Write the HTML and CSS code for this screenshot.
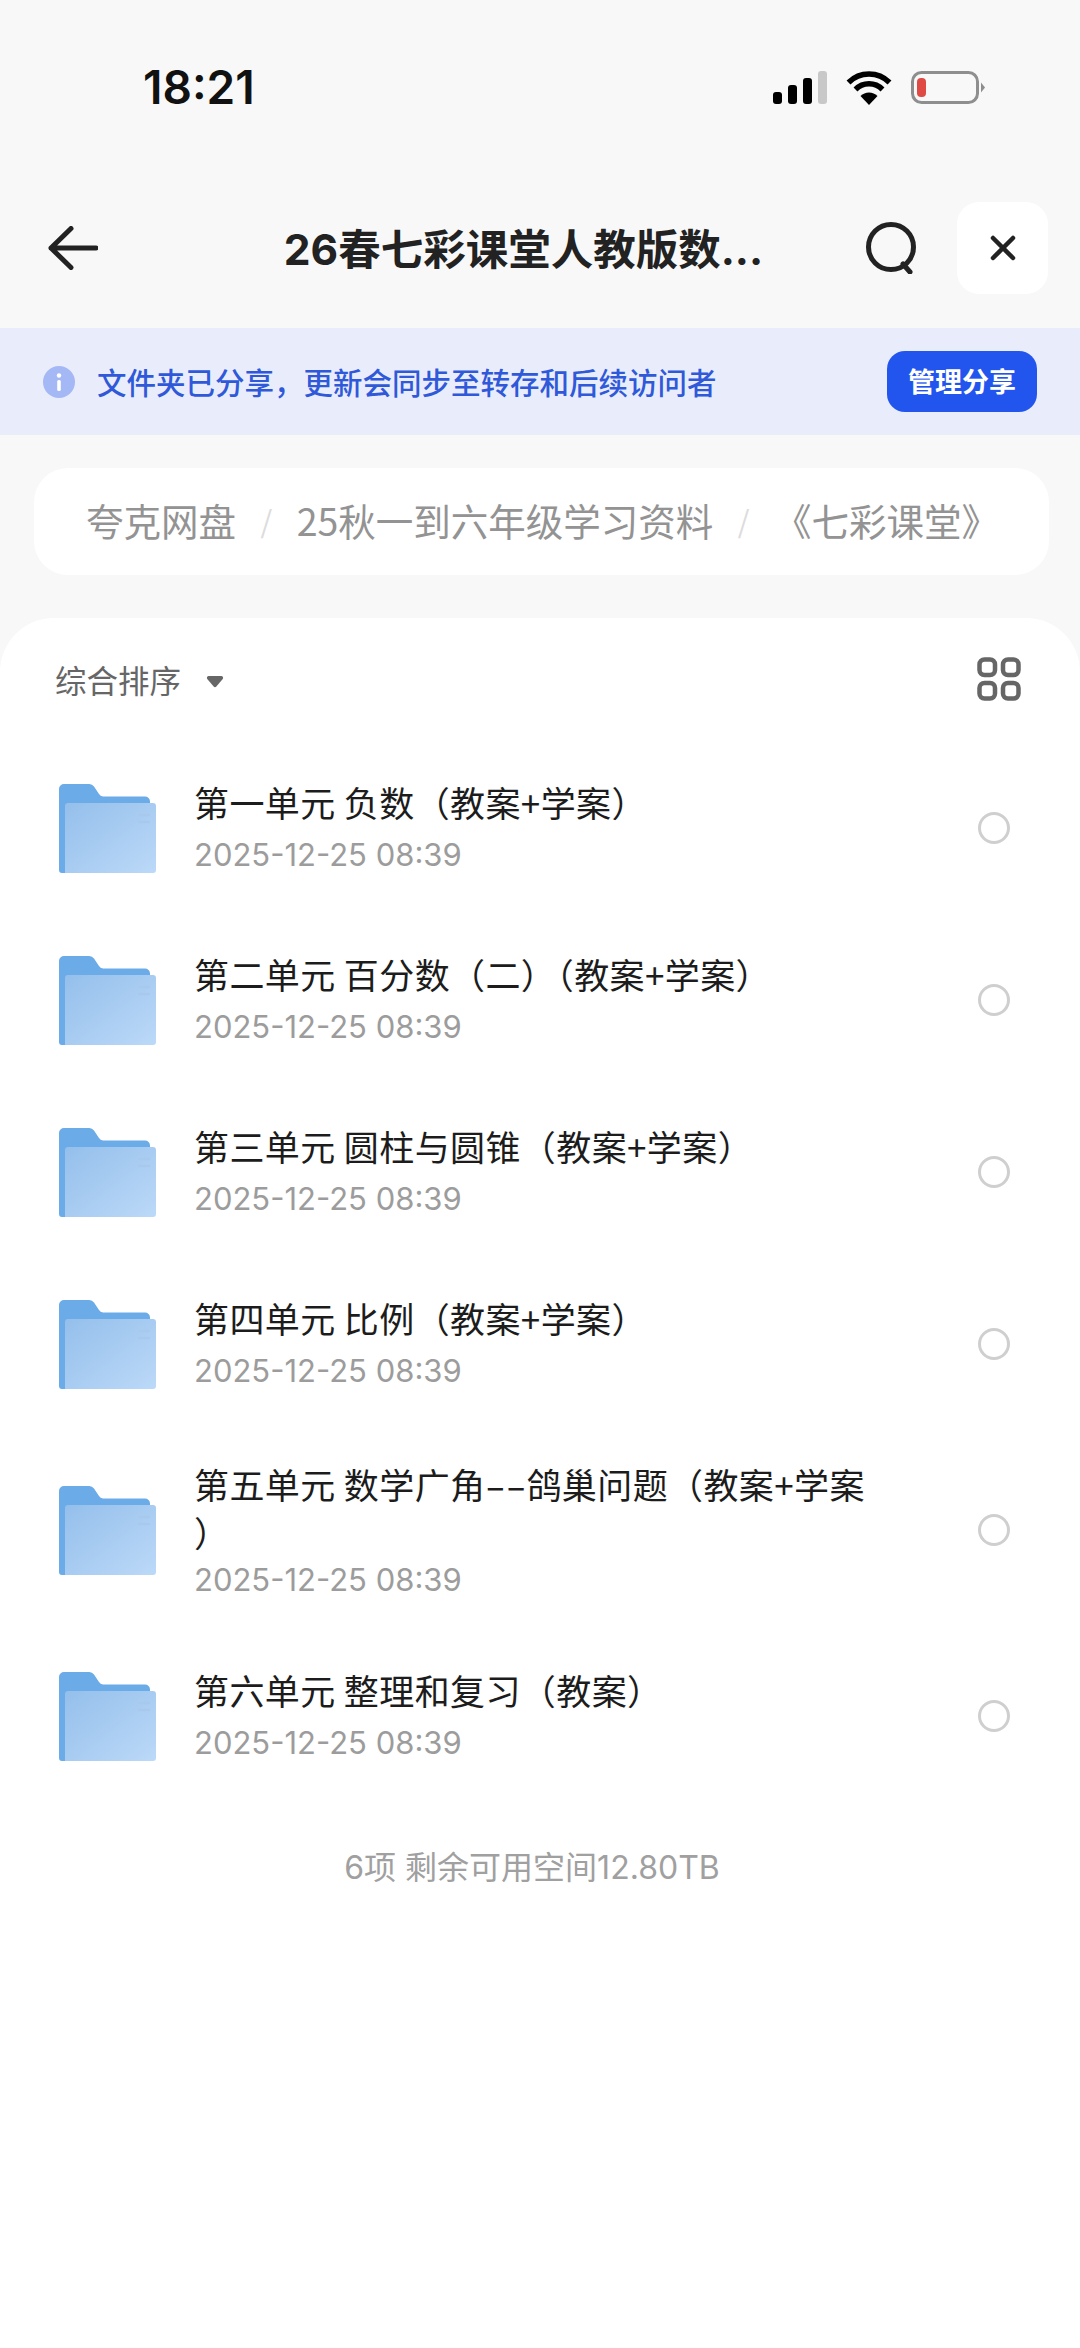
FILE: index.html
```html
<!DOCTYPE html>
<html lang="zh-CN">
<head>
<meta charset="utf-8">
<title>26春七彩课堂人教版数学</title>
<link rel="stylesheet" href="styles.css">
</head>
<body>
<div class="page">
  <svg width="0" height="0" class="defs">
    <defs>
      <linearGradient id="fg" x1="0" y1="0" x2="1" y2="1">
        <stop offset="0" stop-color="#94bfeb"/>
        <stop offset="1" stop-color="#bcd9f8"/>
      </linearGradient>
      <symbol id="folder" viewBox="0 0 97 89">
        <path d="M0 5a5 5 0 0 1 5-5h25a6 6 0 0 1 5 2.500l5 7.500a5 5 0 0 0 4 2.500h42a5 5 0 0 1 5 5V40H8V89H3a3 3 0 0 1-3-3z" fill="#6aabe8"/>
        <path d="M6 22a3 3 0 0 1 3-3h85a3 3 0 0 1 3 3v64a3 3 0 0 1-3 3H6z" fill="url(#fg)"/>
        <path d="M79 31h12M79 38h12" stroke="#a9c9ec" stroke-width="2.500"/>
      </symbol>
      <symbol id="radio" viewBox="0 0 32 32">
        <circle cx="16" cy="16" r="14.500" fill="none" stroke="#cfcfcf" stroke-width="3"/>
      </symbol>
    </defs>
  </svg>

  <div class="status">
    <span class="time">18:21</span>
    <div class="status-icons">
      <svg width="54" height="33" viewBox="0 0 54 33">
        <rect x="0" y="21" width="9" height="12" rx="3" fill="#000"/>
        <rect x="15" y="14" width="9" height="19" rx="3" fill="#000"/>
        <rect x="30" y="7" width="9" height="26" rx="3" fill="#000"/>
        <rect x="45" y="0" width="9" height="33" rx="3" fill="#c8c8c8"/>
      </svg>
      <svg width="46" height="34" viewBox="0 0 46 34">
        <path d="M2.500 11.500a29 29 0 0 1 41 0M9.500 18.500a19 19 0 0 1 27 0" fill="none" stroke="#000" stroke-width="5.500"/>
        <path d="M23 34l-8.500-9a12 12 0 0 1 17 0z" fill="#000"/>
      </svg>
      <svg width="74" height="33" viewBox="0 0 74 33">
        <rect x="1.500" y="1.500" width="65" height="30" rx="9" fill="none" stroke="#8e8e8e" stroke-width="3"/>
        <rect x="6" y="7" width="9" height="19" rx="4" fill="#e04a45"/>
        <path d="M70 11.500l4 5-4 5z" fill="#8e8e8e"/>
      </svg>
    </div>
  </div>

  <header class="nav">
    <svg class="nav-back" width="50" height="44" viewBox="0 0 50 44">
      <path d="M23 2.500L3 22l20 19.500M3 22h45" fill="none" stroke="#222" stroke-width="5" stroke-linecap="round" stroke-linejoin="round"/>
    </svg>
    <h1 class="nav-title">26春七彩课堂人教版数...</h1>
    <svg class="nav-search" width="54" height="52" viewBox="0 0 54 52">
      <circle cx="26" cy="25" r="22.500" fill="none" stroke="#222" stroke-width="5"/>
      <path d="M38 42l7 8" fill="none" stroke="#222" stroke-width="5" stroke-linecap="round"/>
    </svg>
    <button class="nav-close">
      <svg width="28" height="28" viewBox="0 0 28 28">
        <path d="M4 4l20 20M24 4L4 24" fill="none" stroke="#222" stroke-width="4.500" stroke-linecap="round"/>
      </svg>
    </button>
  </header>

  <div class="banner">
    <svg class="banner-icon" width="32" height="32" viewBox="0 0 32 32">
      <circle cx="16" cy="16" r="16" fill="#a3b8f5"/>
      <circle cx="16" cy="9.500" r="2.200" fill="#fff"/>
      <rect x="14.200" y="14" width="3.600" height="11" rx="1.500" fill="#fff"/>
    </svg>
    <span class="banner-text">文件夹已分享，更新会同步至转存和后续访问者</span>
    <button class="banner-btn">管理分享</button>
  </div>

  <nav class="crumbs">
    <span>夸克网盘</span>
    <i class="crumb-sep">/</i>
    <span>25秋一到六年级学习资料</span>
    <i class="crumb-sep">/</i>
    <span>《七彩课堂》</span>
  </nav>

  <main class="sheet">
    <div class="sort">
      <span class="sort-label">综合排序</span>
      <svg class="sort-caret" width="18" height="13" viewBox="0 0 20 14">
        <path d="M3 1h14a2 2 0 0 1 1.600 3.200L11.500 12.500a2 2 0 0 1-3 0L1.400 4.200A2 2 0 0 1 3 1z" fill="#666"/>
      </svg>
      <svg class="sort-grid" width="44" height="44" viewBox="0 0 44 44">
        <g fill="none" stroke="#666" stroke-width="4.500">
          <rect x="2.500" y="2.500" width="15.500" height="15.500" rx="5"/>
          <rect x="26" y="2.500" width="15.500" height="15.500" rx="5"/>
          <rect x="2.500" y="26" width="15.500" height="15.500" rx="5"/>
          <rect x="26" y="26" width="15.500" height="15.500" rx="5"/>
        </g>
      </svg>
    </div>

    <ul class="list">
      <li class="row">
        <svg class="folder"><use href="#folder"/></svg>
        <div class="info"><div class="name">第一单元 负数（教案+学案）</div><div class="date">2025-12-25 08:39</div></div>
        <svg class="radio"><use href="#radio"/></svg>
      </li>
      <li class="row">
        <svg class="folder"><use href="#folder"/></svg>
        <div class="info"><div class="name">第二单元 百分数（二）（教案+学案）</div><div class="date">2025-12-25 08:39</div></div>
        <svg class="radio"><use href="#radio"/></svg>
      </li>
      <li class="row">
        <svg class="folder"><use href="#folder"/></svg>
        <div class="info"><div class="name">第三单元 圆柱与圆锥（教案+学案）</div><div class="date">2025-12-25 08:39</div></div>
        <svg class="radio"><use href="#radio"/></svg>
      </li>
      <li class="row">
        <svg class="folder"><use href="#folder"/></svg>
        <div class="info"><div class="name">第四单元 比例（教案+学案）</div><div class="date">2025-12-25 08:39</div></div>
        <svg class="radio"><use href="#radio"/></svg>
      </li>
      <li class="row row-wrap">
        <svg class="folder"><use href="#folder"/></svg>
        <div class="info"><div class="name">第五单元 数学广角<span class="dash">--</span>鸽巢问题（教案+学案<br>）</div><div class="date">2025-12-25 08:39</div></div>
        <svg class="radio"><use href="#radio"/></svg>
      </li>
      <li class="row">
        <svg class="folder"><use href="#folder"/></svg>
        <div class="info"><div class="name">第六单元 整理和复习（教案）</div><div class="date">2025-12-25 08:39</div></div>
        <svg class="radio"><use href="#radio"/></svg>
      </li>
    </ul>

    <p class="summary">6项 剩余可用空间12.80TB</p>
  </main>
</div>
</body>
</html>
```

FILE: styles.css
```css
* { box-sizing: border-box; }
html, body { margin: 0; padding: 0; }
body {
  background: #f8f8f8;
  font-family: "Inter", "Noto Sans CJK SC", sans-serif;
}
.page {
  width: 1080px;
  height: 2348px;
  display: flex;
  flex-direction: column;
  overflow: hidden;
  background: #f8f8f8;
}
.defs { position: absolute; }

.status {
  height: 168px;
  padding: 71px 95px 0 143px;
  display: flex;
  justify-content: space-between;
  align-items: flex-start;
}
.time {
  font-family: "Inter", sans-serif;
  font-size: 46px;
  font-weight: 600;
  line-height: 32px;
  color: #111;
}
.status-icons { display: flex; align-items: flex-start; gap: 19px; }

.nav {
  height: 160px;
  padding: 0 32px 0 48px;
  display: flex;
  align-items: center;
}
.nav-back { flex: none; }
.nav-title {
  flex: 1;
  margin: 0;
  text-align: center;
  padding: 0 0 3px 84px;
  font-family: "Inter", "Noto Sans CJK SC", sans-serif;
  font-size: 42.500px;
  font-weight: 700;
  color: #222;
  white-space: nowrap;
}
.nav-search { flex: none; margin-right: 38px; }
.nav-close {
  flex: none;
  width: 91px;
  height: 92px;
  padding: 0;
  border: 0;
  border-radius: 22px;
  background: #fff;
  display: flex;
  align-items: center;
  justify-content: center;
}

.banner {
  height: 107px;
  padding: 0 43px 0 43px;
  background: #e9edfb;
  display: flex;
  align-items: center;
}
.banner-icon { flex: none; margin-right: 22px; }
.banner-text {
  flex: 1;
  padding-bottom: 2px;
  font-family: "Noto Sans CJK SC", sans-serif;
  font-size: 29.500px;
  font-weight: 500;
  color: #2f59d9;
  white-space: nowrap;
}
.banner-btn {
  flex: none;
  width: 150px;
  height: 61px;
  padding: 0 0 2px;
  border: 0;
  border-radius: 18px;
  background: #2255ee;
  color: #fff;
  font-family: "Noto Sans CJK SC", sans-serif;
  font-size: 27px;
  font-weight: 700;
}

.crumbs {
  margin: 33px 31px 0 34px;
  height: 107px;
  padding: 0 50px 4px 52px;
  border-radius: 34px;
  background: #fff;
  display: flex;
  align-items: center;
  justify-content: space-between;
  font-family: "Noto Sans CJK SC", "Inter", sans-serif;
  font-size: 37.500px;
  color: #939393;
  white-space: nowrap;
}
.crumb-sep { font-style: normal; color: #dcdcdc; font-size: 30px; }

.sheet {
  flex: 1;
  margin-top: 43px;
  background: #fff;
  border-radius: 54px 54px 0 0;
}
.sort {
  height: 124px;
  padding: 0 59px 44px 55px;
  padding-top: 42px;
  display: flex;
  align-items: center;
}
.sort-label {
  font-family: "Noto Sans CJK SC", sans-serif;
  font-size: 31.500px;
  color: #666;
}
.sort-caret { flex: none; margin-left: 25px; margin-top: 4px; }
.sort-grid { flex: none; margin-left: auto; }

.list { margin: 0; padding: 0; list-style: none; }
.row {
  min-height: 172px;
  padding: 30px 70px 30px 59px;
  display: flex;
  align-items: center;
}
.row-wrap { min-height: 199px; }
.folder { flex: none; width: 97px; height: 89px; margin-right: 38px; }
.info { flex: 1; min-width: 0; }
.name {
  margin-top: -3px;
  font-family: "Noto Sans CJK SC", sans-serif;
  font-size: 35px;
  letter-spacing: 0.4px;
  line-height: 48px;
  color: #1c1c1c;
}
.dash {
  display: inline-block;
  width: 41px;
  letter-spacing: 0;
  transform: scaleX(1.7);
  transform-origin: left center;
}
.date {
  margin-top: 9px;
  font-family: "Inter", sans-serif;
  font-size: 31px;
  line-height: 40px;
  color: #9c9c9c;
}
.row-wrap .name { margin-top: 0; }
.row-wrap .date { margin-top: 4px; }
.radio { flex: none; width: 32px; height: 32px; }

.summary {
  margin: 46px 0 0;
  padding-right: 16px;
  text-align: center;
  font-family: "Inter", "Noto Sans CJK SC", sans-serif;
  font-size: 32px;
  line-height: 40px;
  color: #a0a0a0;
}
```
